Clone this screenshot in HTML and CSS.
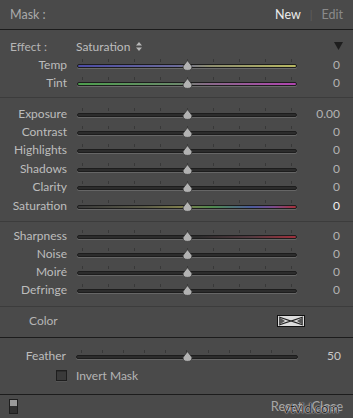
FILE: index.html
```html
<!DOCTYPE html>
<html>
<head>
<meta charset="utf-8">
<link rel="stylesheet" href="styles.css">
</head>
<body>
<div class="panel">
  <div class="header">
    <span class="title">Mask :</span>
    <span class="tabs"><span class="tab-new">New</span><span class="tab-sep">|</span><span class="tab-edit">Edit</span></span>
  </div>

  <div class="section s1">
    <div class="effect-row">
      <span class="effect-label">Effect :</span>
      <span class="effect-value">Saturation
        <svg class="updown" width="6" height="9" viewBox="0 0 6 9"><path d="M3 0 L6 3.5 H0 Z M3 9 L0 5.5 H6 Z" fill="#b8b8b8"/></svg>
      </span>
      <svg class="disclosure" width="9" height="8" viewBox="0 0 9 8"><path d="M0 0 H9 L4.5 8 Z" fill="#1e1e1e"/></svg>
    </div>
    <div class="row"><span class="label">Temp</span><div class="slider"><div class="ticks"><i></i><i></i><i></i><i></i><i></i><i></i><i></i><i></i><i></i></div><div class="track temp"></div><svg class="thumb" width="11" height="11" viewBox="0 0 11 11"><path d="M5.5 0.6 L9.8 6.2 Q10.6 10.4 5.5 10.4 Q0.4 10.4 1.2 6.2 Z"/></svg></div><span class="value">0</span></div>
    <div class="row"><span class="label">Tint</span><div class="slider"><div class="ticks"><i></i><i></i><i></i><i></i><i></i><i></i><i></i><i></i><i></i></div><div class="track tint"></div><svg class="thumb" width="11" height="11" viewBox="0 0 11 11"><path d="M5.5 0.6 L9.8 6.2 Q10.6 10.4 5.5 10.4 Q0.4 10.4 1.2 6.2 Z"/></svg></div><span class="value">0</span></div>
  </div>

  <div class="section s2">
    <div class="row r2"><span class="label">Exposure</span><div class="slider"><div class="ticks"><i></i><i></i><i></i><i></i><i></i><i></i><i></i><i></i><i></i></div><div class="track"></div><svg class="thumb" width="11" height="11" viewBox="0 0 11 11"><path d="M5.5 0.6 L9.8 6.2 Q10.6 10.4 5.5 10.4 Q0.4 10.4 1.2 6.2 Z"/></svg></div><span class="value">0.00</span></div>
    <div class="row r2"><span class="label">Contrast</span><div class="slider"><div class="ticks"><i></i><i></i><i></i><i></i><i></i><i></i><i></i><i></i><i></i></div><div class="track"></div><svg class="thumb" width="11" height="11" viewBox="0 0 11 11"><path d="M5.5 0.6 L9.8 6.2 Q10.6 10.4 5.5 10.4 Q0.4 10.4 1.2 6.2 Z"/></svg></div><span class="value">0</span></div>
    <div class="row r2"><span class="label">Highlights</span><div class="slider"><div class="ticks"><i></i><i></i><i></i><i></i><i></i><i></i><i></i><i></i><i></i></div><div class="track"></div><svg class="thumb" width="11" height="11" viewBox="0 0 11 11"><path d="M5.5 0.6 L9.8 6.2 Q10.6 10.4 5.5 10.4 Q0.4 10.4 1.2 6.2 Z"/></svg></div><span class="value">0</span></div>
    <div class="row r2"><span class="label">Shadows</span><div class="slider"><div class="ticks"><i></i><i></i><i></i><i></i><i></i><i></i><i></i><i></i><i></i></div><div class="track"></div><svg class="thumb" width="11" height="11" viewBox="0 0 11 11"><path d="M5.5 0.6 L9.8 6.2 Q10.6 10.4 5.5 10.4 Q0.4 10.4 1.2 6.2 Z"/></svg></div><span class="value">0</span></div>
    <div class="row r2"><span class="label">Clarity</span><div class="slider"><div class="ticks"><i></i><i></i><i></i><i></i><i></i><i></i><i></i><i></i><i></i></div><div class="track"></div><svg class="thumb" width="11" height="11" viewBox="0 0 11 11"><path d="M5.5 0.6 L9.8 6.2 Q10.6 10.4 5.5 10.4 Q0.4 10.4 1.2 6.2 Z"/></svg></div><span class="value">0</span></div>
    <div class="row r2"><span class="label">Saturation</span><div class="slider"><div class="ticks"><i></i><i></i><i></i><i></i><i></i><i></i><i></i><i></i><i></i></div><div class="track sat"></div><svg class="thumb" width="11" height="11" viewBox="0 0 11 11"><path d="M5.5 0.6 L9.8 6.2 Q10.6 10.4 5.5 10.4 Q0.4 10.4 1.2 6.2 Z"/></svg></div><span class="value bright">0</span></div>
  </div>

  <div class="section s3">
    <div class="row"><span class="label">Sharpness</span><div class="slider"><div class="ticks"><i></i><i></i><i></i><i></i><i></i><i></i><i></i><i></i><i></i></div><div class="track sharp"></div><svg class="thumb" width="11" height="11" viewBox="0 0 11 11"><path d="M5.5 0.6 L9.8 6.2 Q10.6 10.4 5.5 10.4 Q0.4 10.4 1.2 6.2 Z"/></svg></div><span class="value">0</span></div>
    <div class="row"><span class="label">Noise</span><div class="slider"><div class="ticks"><i></i><i></i><i></i><i></i><i></i><i></i><i></i><i></i><i></i></div><div class="track"></div><svg class="thumb" width="11" height="11" viewBox="0 0 11 11"><path d="M5.5 0.6 L9.8 6.2 Q10.6 10.4 5.5 10.4 Q0.4 10.4 1.2 6.2 Z"/></svg></div><span class="value">0</span></div>
    <div class="row"><span class="label">Moiré</span><div class="slider"><div class="ticks"><i></i><i></i><i></i><i></i><i></i><i></i><i></i><i></i><i></i></div><div class="track"></div><svg class="thumb" width="11" height="11" viewBox="0 0 11 11"><path d="M5.5 0.6 L9.8 6.2 Q10.6 10.4 5.5 10.4 Q0.4 10.4 1.2 6.2 Z"/></svg></div><span class="value">0</span></div>
    <div class="row"><span class="label">Defringe</span><div class="slider"><div class="ticks"><i></i><i></i><i></i><i></i><i></i><i></i><i></i><i></i><i></i></div><div class="track"></div><svg class="thumb" width="11" height="11" viewBox="0 0 11 11"><path d="M5.5 0.6 L9.8 6.2 Q10.6 10.4 5.5 10.4 Q0.4 10.4 1.2 6.2 Z"/></svg></div><span class="value">0</span></div>
  </div>

  <div class="section s4">
    <div class="color-row">
      <span class="color-label">Color</span>
      <svg class="swatch" width="28" height="12" viewBox="0 0 28 12">
        <rect x="0.5" y="0.5" width="27" height="11" fill="#dcdcdc" stroke="#111"/>
        <path d="M2 2 L14 6 L26 2 M2 10 L14 6 L26 10" stroke="#222" stroke-width="1.2" fill="none"/>
        <path d="M2 2 L2 10 L8 6 Z M26 2 L26 10 L20 6 Z" fill="#555"/>
      </svg>
    </div>
  </div>

  <div class="section s5">
    <div class="row feather"><span class="label">Feather</span><div class="slider"><div class="ticks"><i></i><i></i><i></i><i></i><i></i><i></i><i></i><i></i><i></i><i></i><i></i></div><div class="track"></div><svg class="thumb" width="11" height="11" viewBox="0 0 11 11"><path d="M5.5 0.6 L9.8 6.2 Q10.6 10.4 5.5 10.4 Q0.4 10.4 1.2 6.2 Z"/></svg></div><span class="value">50</span></div>
    <div class="invert-row"><span class="checkbox"></span><span class="invert-label">Invert Mask</span></div>
  </div>

  <div class="footer">
    <span class="switch"></span>
    <span class="actions"><span>Reset</span><span>Close</span><span class="watermark">vtvid.com</span></span>
  </div>
</div>
</body>
</html>
```

FILE: styles.css
```css
html, body {
  margin: 0;
  padding: 0;
  background: #4a4a4a;
}
.panel {
  width: 353px;
  height: 418px;
  background: #4a4a4a;
  font-family: "Lato", "Open Sans", sans-serif;
  font-size: 12px;
  color: #bdbdbd;
  overflow: hidden;
}
.header {
  height: 29px;
  display: flex;
  align-items: center;
  justify-content: space-between;
  padding: 0 10px;
  border-bottom: 1px solid #1c1c1c;
}
.title { color: #a9a9a9; font-size: 12.5px; }
.tabs { display: flex; align-items: center; gap: 9px; font-size: 12.5px; }
.tab-new { color: #ececec; }
.tab-sep { color: #5e5e5e; font-size: 11px; }
.tab-edit { color: #8a8a8a; }

.section {
  border-bottom: 1px solid #3c3c3c;
}
.s1 { padding: 7px 0 6px; }
.s2 { padding: 6px 0 6.6px; }
.s3 { padding: 5px 0 7px; }
.s4 { padding: 5px 0 7px; border-bottom-color: #1c1c1c; }
.s5 { padding: 9px 0 9px; border-bottom-color: #1c1c1c; }

.effect-row {
  height: 18px;
  display: flex;
  align-items: center;
  padding: 0 10px;
}
.effect-label { width: 66px; color: #b5b5b5; }
.effect-value { display: flex; align-items: center; gap: 6px; color: #bdbdbd; flex: 1; }
.updown { margin-top: 1px; }

.row {
  height: 18px;
  display: grid;
  grid-template-columns: 67px 220px 1fr;
  column-gap: 10px;
  align-items: center;
  padding-right: 13px;
}
.row.r2 { height: 18.4px; }
.label { text-align: right; color: #bdbdbd; }
.value { text-align: right; color: #b3b3b3; }
.value.bright { color: #f0f0f0; }

.slider {
  position: relative;
  height: 12px;
  display: flex;
  flex-direction: column;
  gap: 2px;
  margin-top: 1px;
}
.ticks {
  height: 3px;
  display: flex;
  justify-content: space-between;
  padding: 0 5px;
}
.ticks i {
  width: 1px;
  height: 3px;
  background: #383838;
}
.track {
  height: 2px;
  border: 1px solid #1d1d1d;
  border-radius: 3px;
  background: #2c2c2c;
  box-shadow: 0 1px 0 #666;
}
.track.temp { background: linear-gradient(90deg, #4c4ca6, #6a6a9a 45%, #8e8e70 60%, #b8b862); box-shadow: 0 1px 0 #6a6a6a; }
.track.tint { background: linear-gradient(90deg, #4e9e4e, #6a8a6a 45%, #8a6a8a 60%, #b044b0); box-shadow: 0 1px 0 #6a6a6a; }
.track.sat { background: linear-gradient(90deg, #3a3a3a, #5a5a48 30%, #7e7e4c 48%, #4f8a4f 62%, #4c5a9c 80%, #7c4a8a 90%, #a83038); }
.track.sharp { background: linear-gradient(90deg, #2c2c2c 55%, #553a40 80%, #a0303c); }

.thumb {
  position: absolute;
  left: 104.5px;
  top: 1px;
}
.thumb path {
  fill: #b2b2b2;
  stroke: #2c2c2c;
  stroke-width: 0.7;
}

.color-row {
  height: 18px;
  display: flex;
  align-items: center;
  justify-content: space-between;
  padding: 0 48px 0 29px;
}
.color-label { color: #b5b5b5; }
.swatch { display: block; }

.row.feather {
  grid-template-columns: 66px 222px 1fr;
  padding-right: 12px;
}
.row.feather .value { color: #c8c8c8; }
.row.feather .thumb { left: 105.5px; }

.invert-row {
  height: 18px;
  margin-top: 2px;
  display: flex;
  align-items: center;
  gap: 9px;
  padding-left: 56px;
}
.checkbox {
  width: 9px;
  height: 9px;
  background: #3a3a3a;
  border: 1px solid #1e1e1e;
  box-shadow: inset 0 1px 0 #2e2e2e, 0 1px 0 #555;
}
.invert-label { color: #b5b5b5; }

.footer {
  height: 23px;
  display: flex;
  align-items: center;
  justify-content: space-between;
  padding: 0 10px 0 9px;
}
.switch {
  width: 7px;
  height: 13px;
  border: 1px solid #1e1e1e;
  background: linear-gradient(#9a9a9a 0 50%, #303030 50% 100%);
  display: block;
}
.actions {
  position: relative;
  display: flex;
  gap: 9px;
  color: #a6a6a6;
  font-size: 13px;
}
.watermark {
  position: absolute;
  right: 4px;
  top: 2px;
  color: #2a2a2a;
  font-size: 13px;
  text-shadow: 0 0 2px #d8d8d8, 0 0 1px #ffffff;
}
```
